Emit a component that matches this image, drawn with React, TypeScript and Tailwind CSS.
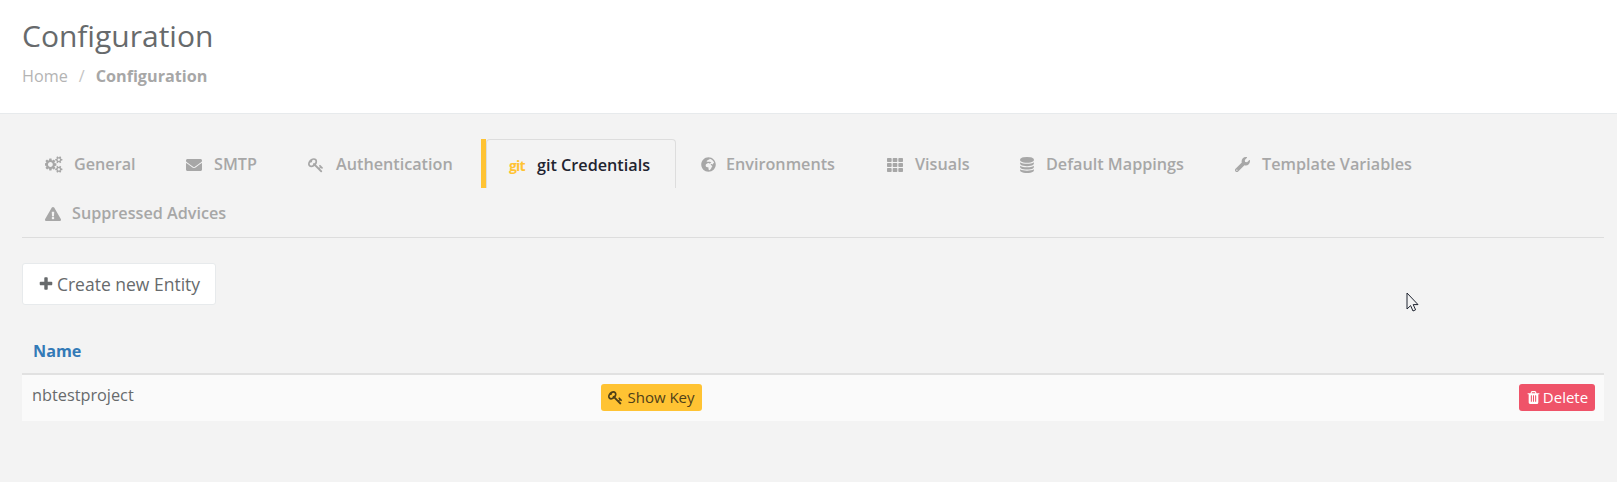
import React from 'react';
import { FaGlobeAfrica, FaTh, FaWrench, FaExclamationTriangle, FaEnvelope } from 'react-icons/fa';

// Font Awesome 4 glyphs, the FA5 set in react-icons draws these differently
function KeyIcon({ className }: { className?: string }) {
  return (
    <svg viewBox="0 0 1792 1792" fill="currentColor" className={className}>
      <path d="M832 512q0-80-56-136t-136-56-136 56-56 136q0 42 19 83-41-19-83-19-80 0-136 56t-56 136 56 136 136 56 136-56 56-136q0-42-19-83 41 19 83 19 80 0 136-56t56-136zm851 704q0 17-49 66t-66 49q-9 0-28.5-16t-36.5-33-38.5-40-24.5-26l-96 96 220 220q28 28 28 68 0 42-39 81t-81 39q-40 0-68-28l-671-671q-176 131-365 131-163 0-265.5-102.5t-102.5-265.5q0-160 95-313t248-248 313-95q163 0 265.5 102.5t102.5 265.5q0 189-131 365l355 355 96-96q-3-3-26-24.5t-40-38.5-33-36.5-16-28.5q0-17 49-66t66-49q13 0 23 10 6 6 46 44.5t82 79.5 86.5 86 73 78 28.5 41z" />
    </svg>
  );
}

function TrashIcon({ className }: { className?: string }) {
  return (
    <svg viewBox="0 0 1792 1792" fill="currentColor" className={className}>
      <path d="M704 1376v-704q0-14-9-23t-23-9h-64q-14 0-23 9t-9 23v704q0 14 9 23t23 9h64q14 0 23-9t9-23zm256 0v-704q0-14-9-23t-23-9h-64q-14 0-23 9t-9 23v704q0 14 9 23t23 9h64q14 0 23-9t9-23zm256 0v-704q0-14-9-23t-23-9h-64q-14 0-23 9t-9 23v704q0 14 9 23t23 9h64q14 0 23-9t9-23zm-544-992h448l-48-117q-7-9-17-11h-317q-10 2-17 11zm928 32v64q0 14-9 23t-23 9h-96v948q0 83-47 143.5t-113 60.5h-832q-66 0-113-58.5t-47-141.5v-952h-96q-14 0-23-9t-9-23v-64q0-14 9-23t23-9h309l70-167q15-37 54-63t79-26h320q40 0 79 26t54 63l70 167h309q14 0 23 9t9 23z" />
    </svg>
  );
}

function PlusIcon({ className }: { className?: string }) {
  return (
    <svg viewBox="0 0 1792 1792" fill="currentColor" className={className}>
      <path d="M1600 736v192q0 40-28 68t-68 28h-416v416q0 40-28 68t-68 28h-192q-40 0-68-28t-28-68v-416h-416q-40 0-68-28t-28-68v-192q0-40 28-68t68-28h416v-416q0-40 28-68t68-28h192q40 0 68 28t28 68v416h416q40 0 68 28t28 68z" />
    </svg>
  );
}

function CogsIcon({ className }: { className?: string }) {
  return (
    <svg viewBox="0 0 1920 1792" fill="currentColor" className={className}>
      <path d="M832 896q0-106-75-181t-181-75-181 75-75 181 75 181 181 75 181-75 75-181zm768 512q0-52-38-90t-90-38-90 38-38 90q0 53 37.5 90.5t90.5 37.5 90.5-37.5 37.5-90.5zm0-1024q0-52-38-90t-90-38-90 38-38 90q0 53 37.5 90.5t90.5 37.5 90.5-37.5 37.5-90.5zm-384 421v185q0 10-7 19.5t-16 10.5l-155 24q-11 35-32 76 34 48 90 115 7 11 7 20 0 12-7 19-23 30-82.5 89.5t-78.5 59.5q-11 0-21-7l-115-90q-37 19-77 31-11 108-23 155-7 24-30 24h-186q-11 0-20-7.5t-10-17.5l-23-153q-34-10-75-31l-118 89q-7 7-20 7-11 0-21-8-144-133-144-160 0-9 7-19 10-14 41-53t47-61q-23-44-35-82l-152-24q-10-1-17-9.5t-7-19.5v-185q0-10 7-19.5t16-10.5l155-24q11-35 32-76-34-48-90-115-7-11-7-20 0-12 7-20 22-30 82-89t79-59q11 0 21 7l115 90q34-18 77-32 11-108 23-154 7-24 30-24h186q11 0 20 7.5t10 17.5l23 153q34 10 75 31l118-89q8-7 20-7 11 0 21 8 144 133 144 160 0 8-7 19-12 16-42 54t-45 60q23 48 34 82l152 23q10 2 17 10.5t7 19.5zm640 533v140q0 16-149 31-12 27-30 52 51 113 51 138 0 4-4 7-122 71-124 71-8 0-46-47t-52-68q-20 2-30 2t-30-2q-14 21-52 68t-46 47q-2 0-124-71-4-3-4-7 0-25 51-138-18-25-30-52-149-15-149-31v-140q0-16 149-31 13-29 30-52-51-113-51-138 0-4 4-7 4-2 35-20t59-34 30-16q8 0 46 46.5t52 67.5q20-2 30-2t30 2q51-71 92-112l6-2q4 0 124 70 4 3 4 7 0 25-51 138 17 23 30 52 149 15 149 31zm0-1024v140q0 16-149 31-12 27-30 52 51 113 51 138 0 4-4 7-122 71-124 71-8 0-46-47t-52-68q-20 2-30 2t-30-2q-14 21-52 68t-46 47q-2 0-124-71-4-3-4-7 0-25 51-138-18-25-30-52-149-15-149-31v-140q0-16 149-31 13-29 30-52-51-113-51-138 0-4 4-7 4-2 35-20t59-34 30-16q8 0 46 46.5t52 67.5q20-2 30-2t30 2q51-71 92-112l6-2q4 0 124 70 4 3 4 7 0 25-51 138 17 23 30 52 149 15 149 31z" />
    </svg>
  );
}

function DatabaseIcon({ className }: { className?: string }) {
  return (
    <svg viewBox="0 0 1792 1792" fill="currentColor" className={className}>
      <path d="M896 768q237 0 443-43t325-127v170q0 69-103 128t-280 93.5-385 34.5-385-34.5-280-93.5-103-128v-170q119 84 325 127t443 43zm0 768q237 0 443-43t325-127v170q0 69-103 128t-280 93.5-385 34.5-385-34.5-280-93.5-103-128v-170q119 84 325 127t443 43zm0-384q237 0 443-43t325-127v170q0 69-103 128t-280 93.5-385 34.5-385-34.5-280-93.5-103-128v-170q119 84 325 127t443 43zm0-1152q208 0 385 34.5t280 93.5 103 128v128q0 69-103 128t-280 93.5-385 34.5-385-34.5-280-93.5-103-128v-128q0-69 103-128t280-93.5 385-34.5z" />
    </svg>
  );
}

const tabs = [
  { label: 'General', icon: <CogsIcon className="w-[18px] h-[17px]" />, width: 'w-[141px]', inset: 'pl-[23px]', gap: 'gap-[11px]' },
  { label: 'SMTP', icon: <FaEnvelope className="w-[16px] h-[16px]" />, width: 'w-[122px]', inset: 'pl-[23px]', gap: 'gap-[12px]' },
  { label: 'Authentication', icon: <KeyIcon className="w-[16px] h-[16px]" />, width: 'w-[196px]', inset: 'pl-[23px]', gap: 'gap-[12px]' }
];

const tabsAfter = [
  { label: 'Environments', icon: <FaGlobeAfrica className="w-[15px] h-[15px]" />, width: 'w-[188px]', inset: 'pl-[25px]', gap: 'gap-[10px]' },
  { label: 'Visuals', icon: <FaTh className="w-[16px] h-[16px]" />, width: 'w-[132px]', inset: 'pl-[23px]', gap: 'gap-[12px]' },
  { label: 'Default Mappings', icon: <DatabaseIcon className="w-[16px] h-[16px]" />, width: 'w-[216px]', inset: 'pl-[23px]', gap: 'gap-[11px]' },
  { label: 'Template Variables', icon: <FaWrench className="w-[15px] h-[15px]" />, width: 'w-[230px]', inset: 'pl-[23px]', gap: 'gap-[12px]' }
];

function Tab({ label, icon, width, inset, gap }: { label: string; icon: React.ReactNode; width: string; inset: string; gap: string }) {
  return (
    <div className={`h-[49px] ${width} ${inset} pt-[2px] flex items-center ${gap} text-[#a7a7a7] text-[16.2px] font-semibold`}>
      {icon}
      <span>{label}</span>
    </div>
  );
}

export default function App() {
  return (
    <div className="min-h-[482px] bg-[#f3f3f3] text-[#676a6c] font-['Open_Sans',sans-serif] relative">
      {/* Page heading */}
      <div className="h-[114px] bg-white border-b border-[#e7eaec] px-[22px] pt-[15px]">
        <h2 className="text-[30px] leading-[42px] font-normal">Configuration</h2>
        <div className="mt-[8px] flex items-center text-[16.2px] leading-[22px]">
          <span className="text-[#b4b4b4]">Home</span>
          <span className="text-[#c4c4c4] mx-[11px]">/</span>
          <span className="text-[#a7a7a7] font-bold">Configuration</span>
        </div>
      </div>

      <div className="pl-[22px] pr-[13px] pt-[25px]">
        {/* Tabs */}
        <div className="flex flex-wrap border-b border-[#dddddd] h-[99px] content-start">
          {tabs.map((tab) => (
            <Tab key={tab.label} {...tab} />
          ))}
          <div className="h-[49px] w-[195px] flex">
            <div className="w-[5px] h-[49px] bg-[#ffc333]" />
            <div className="flex-1 h-[49px] border border-b-0 border-[#dddddd] rounded-t-[4px] pl-[22px] pt-[2px] flex items-center gap-[12px] text-[16.2px] font-semibold text-[#1f2430]">
              <span className="w-[16px] text-[#ffc333] text-[14px] font-bold tracking-[-0.8px]">git</span>
              <span>git Credentials</span>
            </div>
          </div>
          {tabsAfter.map((tab) => (
            <Tab key={tab.label} {...tab} />
          ))}
          <Tab
            label="Suppressed Advices"
            icon={<FaExclamationTriangle className="w-[16px] h-[16px]" />}
            width="w-[240px]"
            inset="pl-[23px]"
            gap="gap-[11px]"
          />
        </div>

        {/* Create button */}
        <button className="mt-[25px] h-[42px] w-[194px] bg-white border border-[#e7eaec] rounded-[3px] flex items-center justify-center gap-[3px] text-[#676a6c] text-[17.5px]">
          <PlusIcon className="w-[16px] h-[16px]" />
          <span>Create new Entity</span>
        </button>

        {/* Table */}
        <div className="mt-[25px]">
          <div className="h-[45px] border-b-2 border-[#e1e1e1] px-[11px] flex items-center text-[16.2px] font-bold text-[#337ab7]">
            Name
          </div>
          <div className="h-[46px] bg-[#fafafa] pl-[10px] pr-[9px] flex items-center">
            <span className="w-[569px] text-[16.3px] -mt-[6px]">nbtestproject</span>
            <button className="-mt-[2px] h-[27px] w-[101px] bg-[#ffc333] rounded-[3px] flex items-center justify-center gap-[4px] text-[#4f4018] text-[15px]">
              <KeyIcon className="w-[15px] h-[15px]" />
              <span>Show Key</span>
            </button>
            <button className="-mt-[2px] ml-auto h-[27px] w-[76px] bg-[#ef5369] rounded-[3px] flex items-center justify-center gap-[2px] text-white text-[15px]">
              <TrashIcon className="w-[15px] h-[15px]" />
              <span>Delete</span>
            </button>
          </div>
        </div>
      </div>

      {/* Mouse pointer */}
      <svg viewBox="0 0 13 20" className="absolute left-[1406px] top-[292px] w-[13px] h-[20px]">
        <path d="M1 1v16l3.6-3.4 2.4 5.4 2.6-1.2-2.4-5.2H12z" fill="#f3f3f3" stroke="#1f2430" strokeWidth="1" />
      </svg>
    </div>
  );
}
